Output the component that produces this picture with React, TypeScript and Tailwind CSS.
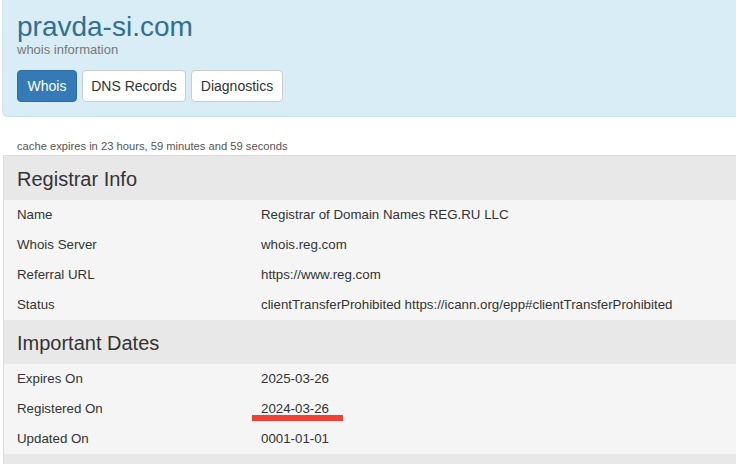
const registrar: [string, string][] = [
  ['Name', 'Registrar of Domain Names REG.RU LLC'],
  ['Whois Server', 'whois.reg.com'],
  ['Referral URL', 'https://www.reg.com'],
  ['Status', 'clientTransferProhibited https://icann.org/epp#clientTransferProhibited'],
];

const dates: [string, string][] = [
  ['Expires On', '2025-03-26'],
  ['Registered On', '2024-03-26'],
  ['Updated On', '0001-01-01'],
];

function Section({ title, rows, mark }: { title: string; rows: [string, string][]; mark?: string }) {
  return (
    <div>
      <div className="h-[44px] bg-[#e8e8e8] pl-[13px] pt-[1px] flex items-center text-[20px] text-[#333]">{title}</div>
      <div className="bg-[#f5f5f5]">
        {rows.map(([k, v]) => (
          <div key={k} className="grid grid-cols-[244px_1fr] pl-[13px] h-[30px] items-center text-[13.3px] leading-[30px] text-[#333] whitespace-nowrap">
            <span>{k}</span>
            <span className="relative">
              {v}
              {mark === k && <span className="absolute left-[-9px] top-[21px] w-[91px] h-[6px] bg-[#ef4136]" />}
            </span>
          </div>
        ))}
      </div>
    </div>
  );
}

export default function App() {
  return (
    <div className="min-h-screen w-[736px] overflow-hidden bg-white font-['Liberation_Sans',Arial,sans-serif]">
      <div className="pl-[2px]">
        <div className="h-[117px] box-border bg-[#d9edf7] border-b border-l border-[#c6e3ef] rounded-bl-[6px] pl-[14px] pt-[13px]">
          <h1 className="text-[28px] leading-[28px] text-[#31708f]">pravda-si.com</h1>
          <p className="mt-[1px] text-[13px] leading-[15px] text-[#777]">whois information</p>
          <div className="flex gap-[5px] mt-[13px] text-[14px]">
            <button className="w-[60px] h-[32px] rounded-[4px] bg-[#337ab7] border border-[#2e6da4] text-white">Whois</button>
            <button className="w-[104px] h-[32px] rounded-[4px] bg-white border border-[#ccc] text-[#333]">DNS Records</button>
            <button className="w-[92px] h-[32px] rounded-[4px] bg-white border border-[#ccc] text-[#333]">Diagnostics</button>
          </div>
        </div>
      </div>
      <p className="mt-[21px] pl-[17px] text-[11.2px] leading-[16px] text-[#555]">cache expires in 23 hours, 59 minutes and 59 seconds</p>
      <div className="ml-[3px] mt-[1px] border-t border-l border-[#dcdcdc]">
        <Section title="Registrar Info" rows={registrar} />
        <Section title="Important Dates" rows={dates} mark="Registered On" />
        <div className="h-[43px] bg-[#e8e8e8]" />
      </div>
    </div>
  );
}
